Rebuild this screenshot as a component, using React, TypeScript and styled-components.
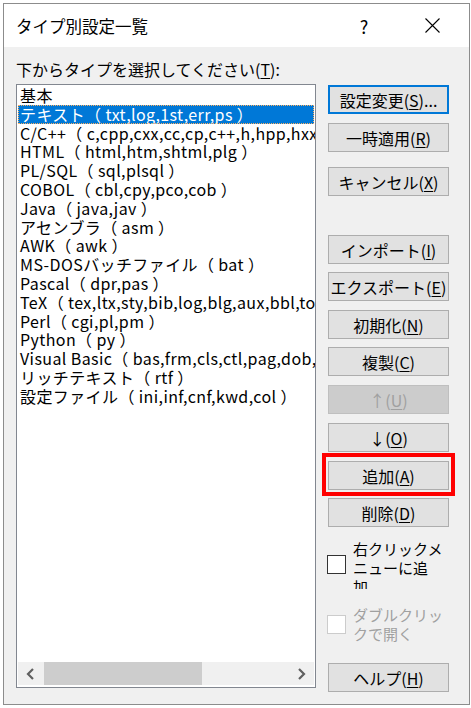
import React from "react";
import styled, { createGlobalStyle } from "styled-components";

const FONT = `"Noto Sans CJK JP", "Noto Sans", sans-serif`;

const GlobalStyle = createGlobalStyle`
  html, body {
    margin: 0;
    padding: 0;
    background: #ffffff;
  }
  body {
    font-family: ${FONT};
    color: #000000;
  }
`;

const Page = styled.div`
  width: 471px;
  height: 708px;
  padding: 3px 0 0 3px;
  box-sizing: border-box;
`;

const Window = styled.div`
  width: 467px;
  height: 702px;
  box-sizing: border-box;
  border: 1px solid #8c8c8c;
  background: #f0f0f0;
  display: flex;
  flex-direction: column;
`;

const TitleBar = styled.div`
  flex: none;
  height: 43px;
  background: #ffffff;
  display: flex;
  align-items: center;
  padding: 0 14px 0 12px;
`;

const Title = styled.div`
  flex: 1;
  font-size: 16.5px;
  white-space: nowrap;
`;

const TitleButton = styled.div<{ $mr?: number }>`
  width: 46px;
  height: 100%;
  margin-right: ${({ $mr }) => $mr ?? 0}px;
  display: flex;
  align-items: center;
  justify-content: center;
  font-size: 18px;
`;

const Body = styled.div`
  flex: 1;
  min-height: 0;
  padding: 10px 0 0 12px;
  display: flex;
  flex-direction: column;
`;

const Prompt = styled.div`
  font-size: 16px;
  line-height: 24px;
  height: 24px;
  white-space: nowrap;
`;

const Main = styled.div`
  display: grid;
  grid-template-columns: 300px 121px;
  column-gap: 12px;
  margin-top: 3px;
`;

const ListBox = styled.div`
  height: 604px;
  box-sizing: border-box;
  border: 1px solid #828790;
  background: #ffffff;
  display: flex;
  flex-direction: column;
`;

const Items = styled.div`
  flex: 1;
  min-height: 0;
  overflow: hidden;
  padding: 1px 1px 0 1px;
`;

const Item = styled.div<{ $selected?: boolean }>`
  font-size: 16px;
  line-height: 18.8px;
  height: 18.8px;
  padding-left: 2px;
  letter-spacing: 0.4px;
  white-space: nowrap;
  color: ${({ $selected }) => ($selected ? "#ffffff" : "#000000")};
  background: ${({ $selected }) => ($selected ? "#0078d7" : "transparent")};
  outline: ${({ $selected }) => ($selected ? "1px dotted #ffb060" : "none")};
  outline-offset: -1px;
`;

const HScroll = styled.div`
  flex: none;
  height: 23px;
  margin: 0 1px 2px 1px;
  background: #f0f0f0;
  display: flex;
  align-items: stretch;
`;

const ScrollArrow = styled.div`
  width: 25px;
  flex: none;
  display: flex;
  align-items: center;
  justify-content: center;
`;

const ScrollTrack = styled.div`
  flex: 1;
  display: flex;
  align-items: stretch;
  padding-left: 1px;
`;

const ScrollThumb = styled.div`
  background: #cdcdcd;
`;

const Buttons = styled.div`
  display: flex;
  flex-direction: column;
  padding-top: 1px;
`;

const Button = styled.div<{ $mt?: number; $default?: boolean; $disabled?: boolean }>`
  position: relative;
  height: 29px;
  box-sizing: border-box;
  margin-top: ${({ $mt }) => $mt ?? 9}px;
  border: ${({ $default, $disabled }) =>
    $default ? "2px solid #0078d7" : $disabled ? "1px solid #bfbfbf" : "1px solid #adadad"};
  background: ${({ $disabled }) => ($disabled ? "#cccccc" : "#e1e1e1")};
  color: ${({ $disabled }) => ($disabled ? "#a0a0a0" : "#000000")};
  font-size: 16px;
  display: flex;
  align-items: center;
  justify-content: center;
  white-space: nowrap;
`;

const Mnemonic = styled.span`
  text-decoration: underline;
  text-underline-offset: 2px;
`;

const Highlight = styled.div`
  position: absolute;
  top: -9px;
  left: -7px;
  right: -7px;
  bottom: -7px;
  border: 4px solid #ff0000;
  pointer-events: none;
`;

const CheckRow = styled.div<{ $mt: number; $h: number }>`
  margin-top: ${({ $mt }) => $mt}px;
  height: ${({ $h }) => $h}px;
  overflow: hidden;
  display: flex;
  align-items: center;
  gap: 7px;
  margin-left: -1px;
`;

const CheckBox = styled.div<{ $disabled?: boolean }>`
  width: 19px;
  height: 19px;
  flex: none;
  box-sizing: border-box;
  background: #ffffff;
  border: 1px solid ${({ $disabled }) => ($disabled ? "#cccccc" : "#333333")};
`;

const CheckText = styled.div<{ $disabled?: boolean; $top?: boolean }>`
  align-self: ${({ $top }) => ($top ? "flex-start" : "center")};
  font-size: 15px;
  line-height: 19px;
  color: ${({ $disabled }) => ($disabled ? "#a0a0a0" : "#000000")};
  white-space: nowrap;
`;

const items = [
  "基本",
  "テキスト（ txt,log,1st,err,ps ）",
  "C/C++（ c,cpp,cxx,cc,cp,c++,h,hpp,hxx ）",
  "HTML（ html,htm,shtml,plg ）",
  "PL/SQL（ sql,plsql ）",
  "COBOL（ cbl,cpy,pco,cob ）",
  "Java（ java,jav ）",
  "アセンブラ（ asm ）",
  "AWK（ awk ）",
  "MS-DOSバッチファイル（ bat ）",
  "Pascal（ dpr,pas ）",
  "TeX（ tex,ltx,sty,bib,log,blg,aux,bbl,toc,lof,lot,idx,ind,glo ）",
  "Perl（ cgi,pl,pm ）",
  "Python（ py ）",
  "Visual Basic（ bas,frm,cls,ctl,pag,dob,dsr,vb ）",
  "リッチテキスト（ rtf ）",
  "設定ファイル（ ini,inf,cnf,kwd,col ）",
];

const Chevron: React.FC<{ dir: "left" | "right" }> = ({ dir }) => (
  <svg width="9" height="12" viewBox="0 0 9 12">
    <path
      d={dir === "left" ? "M7 1 L2 6 L7 11" : "M2 1 L7 6 L2 11"}
      fill="none"
      stroke="#606060"
      strokeWidth="2.2"
    />
  </svg>
);

const CloseIcon = () => (
  <svg width="15" height="15" viewBox="0 0 15 15">
    <path d="M0.5 0.5 L14.5 14.5 M14.5 0.5 L0.5 14.5" stroke="#000" strokeWidth="1.1" />
  </svg>
);

export default function App() {
  return (
    <>
      <GlobalStyle />
      <Page>
        <Window>
          <TitleBar>
            <Title>タイプ別設定一覧</Title>
            <TitleButton $mr={22}>?</TitleButton>
            <TitleButton>
              <CloseIcon />
            </TitleButton>
          </TitleBar>
          <Body>
            <Prompt>
              下からタイプを選択してください(<Mnemonic>T</Mnemonic>):
            </Prompt>
            <Main>
              <ListBox>
                <Items>
                  {items.map((label, i) => (
                    <Item key={i} $selected={i === 1}>
                      {label}
                    </Item>
                  ))}
                </Items>
                <HScroll>
                  <ScrollArrow>
                    <Chevron dir="left" />
                  </ScrollArrow>
                  <ScrollTrack>
                    <ScrollThumb style={{ width: `${(157 / 244) * 100}%` }} />
                  </ScrollTrack>
                  <ScrollArrow>
                    <Chevron dir="right" />
                  </ScrollArrow>
                </HScroll>
              </ListBox>
              <Buttons>
                <Button $mt={0} $default>
                  設定変更(<Mnemonic>S</Mnemonic>)...
                </Button>
                <Button>
                  一時適用(<Mnemonic>R</Mnemonic>)
                </Button>
                <Button $mt={15}>
                  キャンセル(<Mnemonic>X</Mnemonic>)
                </Button>
                <Button $mt={39}>
                  インポート(<Mnemonic>I</Mnemonic>)
                </Button>
                <Button $mt={8}>
                  エクスポート(<Mnemonic>E</Mnemonic>)
                </Button>
                <Button>
                  初期化(<Mnemonic>N</Mnemonic>)
                </Button>
                <Button $mt={8}>
                  複製(<Mnemonic>C</Mnemonic>)
                </Button>
                <Button $disabled>
                  ↑(<Mnemonic>U</Mnemonic>)
                </Button>
                <Button>
                  ↓(<Mnemonic>O</Mnemonic>)
                </Button>
                <Button>
                  追加(<Mnemonic>A</Mnemonic>)
                  <Highlight />
                </Button>
                <Button $mt={8}>
                  削除(<Mnemonic>D</Mnemonic>)
                </Button>
                <CheckRow $mt={12} $h={50}>
                  <CheckBox />
                  <CheckText $top>
                    右クリックメ
                    <br />
                    ニューに追
                    <br />加
                  </CheckText>
                </CheckRow>
                <CheckRow $mt={15} $h={40}>
                  <CheckBox $disabled />
                  <CheckText $disabled>
                    ダブルクリッ
                    <br />
                    クで開く
                  </CheckText>
                </CheckRow>
                <Button $mt={19}>
                  ヘルプ(<Mnemonic>H</Mnemonic>)
                </Button>
              </Buttons>
            </Main>
          </Body>
        </Window>
      </Page>
    </>
  );
}
